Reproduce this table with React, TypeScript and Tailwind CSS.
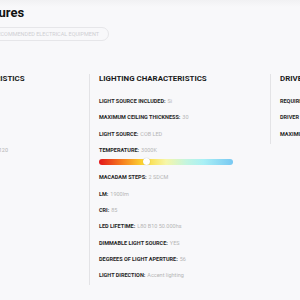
import React from "react";

type Item = { label: string; value: string; bar?: boolean };

const leftItems: Item[] = [
  { label: "LUMINAIRE TYPE:", value: "Recessed" },
  { label: "MATERIAL:", value: "Aluminium" },
  { label: "COLOR:", value: "White" },
  { label: "CUT-OUT DIMENSIONS (MM):", value: "Ø 120" },
];

const lightingItems: Item[] = [
  { label: "LIGHT SOURCE INCLUDED:", value: "Si" },
  { label: "MAXIMUM CEILING THICKNESS:", value: "30" },
  { label: "LIGHT SOURCE:", value: "COB LED" },
  { label: "TEMPERATURE:", value: "3000K", bar: true },
  { label: "MACADAM STEPS:", value: "2 SDCM" },
  { label: "LM:", value: "1900lm" },
  { label: "CRI:", value: "85" },
  { label: "LED LIFETIME:", value: "L80 B10 50.000hs" },
  { label: "DIMMABLE LIGHT SOURCE:", value: "YES" },
  { label: "DEGREES OF LIGHT APERTURE:", value: "56" },
  { label: "LIGHT DIRECTION:", value: "Accent lighting" },
];

const driverItems: Item[] = [
  { label: "REQUIRED DRIVER:", value: "Yes" },
  { label: "DRIVER INCLUDED:", value: "Yes" },
  { label: "MAXIMUM CURRENT:", value: "500mA" },
];

function Row({ item }: { item: Item }) {
  return (
    <div>
      <div className="h-[16.3px] flex items-center whitespace-nowrap text-[5.5px] leading-none">
        <span className="font-bold text-[#262626]">{item.label}</span>
        <span className="ml-[2px] text-[#b5b5b5]">{item.value}</span>
      </div>
      {item.bar && (
        <div className="relative mb-[5px] h-[6px] w-[134px] rounded-full bg-[linear-gradient(90deg,#e3161b_0%,#f7821e_18%,#fcd734_33%,#f6f6a8_50%,#c4f5df_65%,#a9f0f5_78%,#78c8f2_100%)]">
          <div className="absolute left-[44px] top-[-0.5px] h-[7px] w-[7px] rounded-full bg-white shadow-[0_0_1px_rgba(0,0,0,0.3)]" />
        </div>
      )}
    </div>
  );
}

function Column({ title, items }: { title: string; items: Item[] }) {
  return (
    <div className="border-l border-[#e3e3e6] pl-[9px] pb-[1px]">
      <h2 className="h-[10px] text-[7.9px] leading-[10px] font-bold text-[#1a1a1a] whitespace-nowrap">
        {title}
      </h2>
      <div className="mt-[9.8px] flex flex-col">
        {items.map((it) => (
          <Row key={it.label} item={it} />
        ))}
      </div>
    </div>
  );
}

export default function App() {
  return (
    <div className="w-[300px] h-[300px] overflow-hidden bg-[#f8f8fa] font-['Roboto',sans-serif]">
      <div className="h-[7px] bg-[linear-gradient(180deg,#f1f1f3,#f8f8fa)]" />
      <div className="ml-[-23px]">
        <h1 className="text-[13px] leading-[12px] font-bold text-[#111] whitespace-nowrap">
          Fixtures
        </h1>
      </div>
      <div className="ml-[-16px] mt-[3px] inline-flex h-[14px] items-center rounded-full border border-[#e6e6e9] px-[9px] text-[5.5px] text-[#cfcfd3] whitespace-nowrap">
        RECOMMENDED ELECTRICAL EQUIPMENT
      </div>
      <div className="ml-[-92px] mt-[31px] grid grid-cols-[181px_181px_181px] items-start">
        <Column title="GENERAL CHARACTERISTICS" items={leftItems} />
        <Column title="LIGHTING CHARACTERISTICS" items={lightingItems} />
        <Column title="DRIVER CHARACTERISTICS" items={driverItems} />
      </div>
    </div>
  );
}
